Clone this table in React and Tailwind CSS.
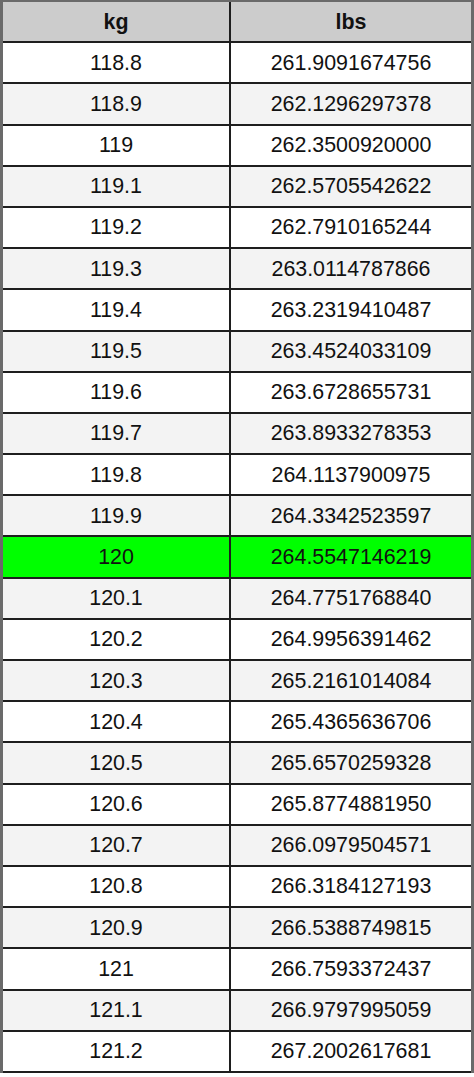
import React from "react";

const rows = [
  ["118.8", "261.9091674756"],
  ["118.9", "262.1296297378"],
  ["119", "262.3500920000"],
  ["119.1", "262.5705542622"],
  ["119.2", "262.7910165244"],
  ["119.3", "263.0114787866"],
  ["119.4", "263.2319410487"],
  ["119.5", "263.4524033109"],
  ["119.6", "263.6728655731"],
  ["119.7", "263.8933278353"],
  ["119.8", "264.1137900975"],
  ["119.9", "264.3342523597"],
  ["120", "264.5547146219"],
  ["120.1", "264.7751768840"],
  ["120.2", "264.9956391462"],
  ["120.3", "265.2161014084"],
  ["120.4", "265.4365636706"],
  ["120.5", "265.6570259328"],
  ["120.6", "265.8774881950"],
  ["120.7", "266.0979504571"],
  ["120.8", "266.3184127193"],
  ["120.9", "266.5388749815"],
  ["121", "266.7593372437"],
  ["121.1", "266.9797995059"],
  ["121.2", "267.2002617681"],
];

const App = () => {
  return (
    <div className="w-[474px] bg-white" style={{ fontFamily: '"Liberation Sans", Arial, sans-serif' }}>
      <div className="border-x-[3px] border-t-2 border-[#6a6a6a]">
        <div className="flex h-[41.2px] border-b-2 border-[#1e1e1e] bg-[#cccccc] text-[21.4px] font-bold text-[#111]">
          <div className="flex w-[228px] items-center justify-center border-r-2 border-[#1e1e1e]">kg</div>
          <div className="flex flex-1 items-center justify-center">lbs</div>
        </div>
        {rows.map(([kg, lbs], i) => (
          <div
            key={kg}
            className={`flex h-[41.2px] border-b-2 border-[#1e1e1e] text-[21.4px] text-[#111] ${
              kg === "120" ? "bg-[#00ff00]" : i % 2 === 0 ? "bg-white" : "bg-[#f3f3f3]"
            }`}
          >
            <div className="flex w-[228px] items-center justify-center border-r-2 border-[#1e1e1e]">{kg}</div>
            <div className="flex flex-1 items-center justify-center">{lbs}</div>
          </div>
        ))}
      </div>
    </div>
  );
};

export default App;
